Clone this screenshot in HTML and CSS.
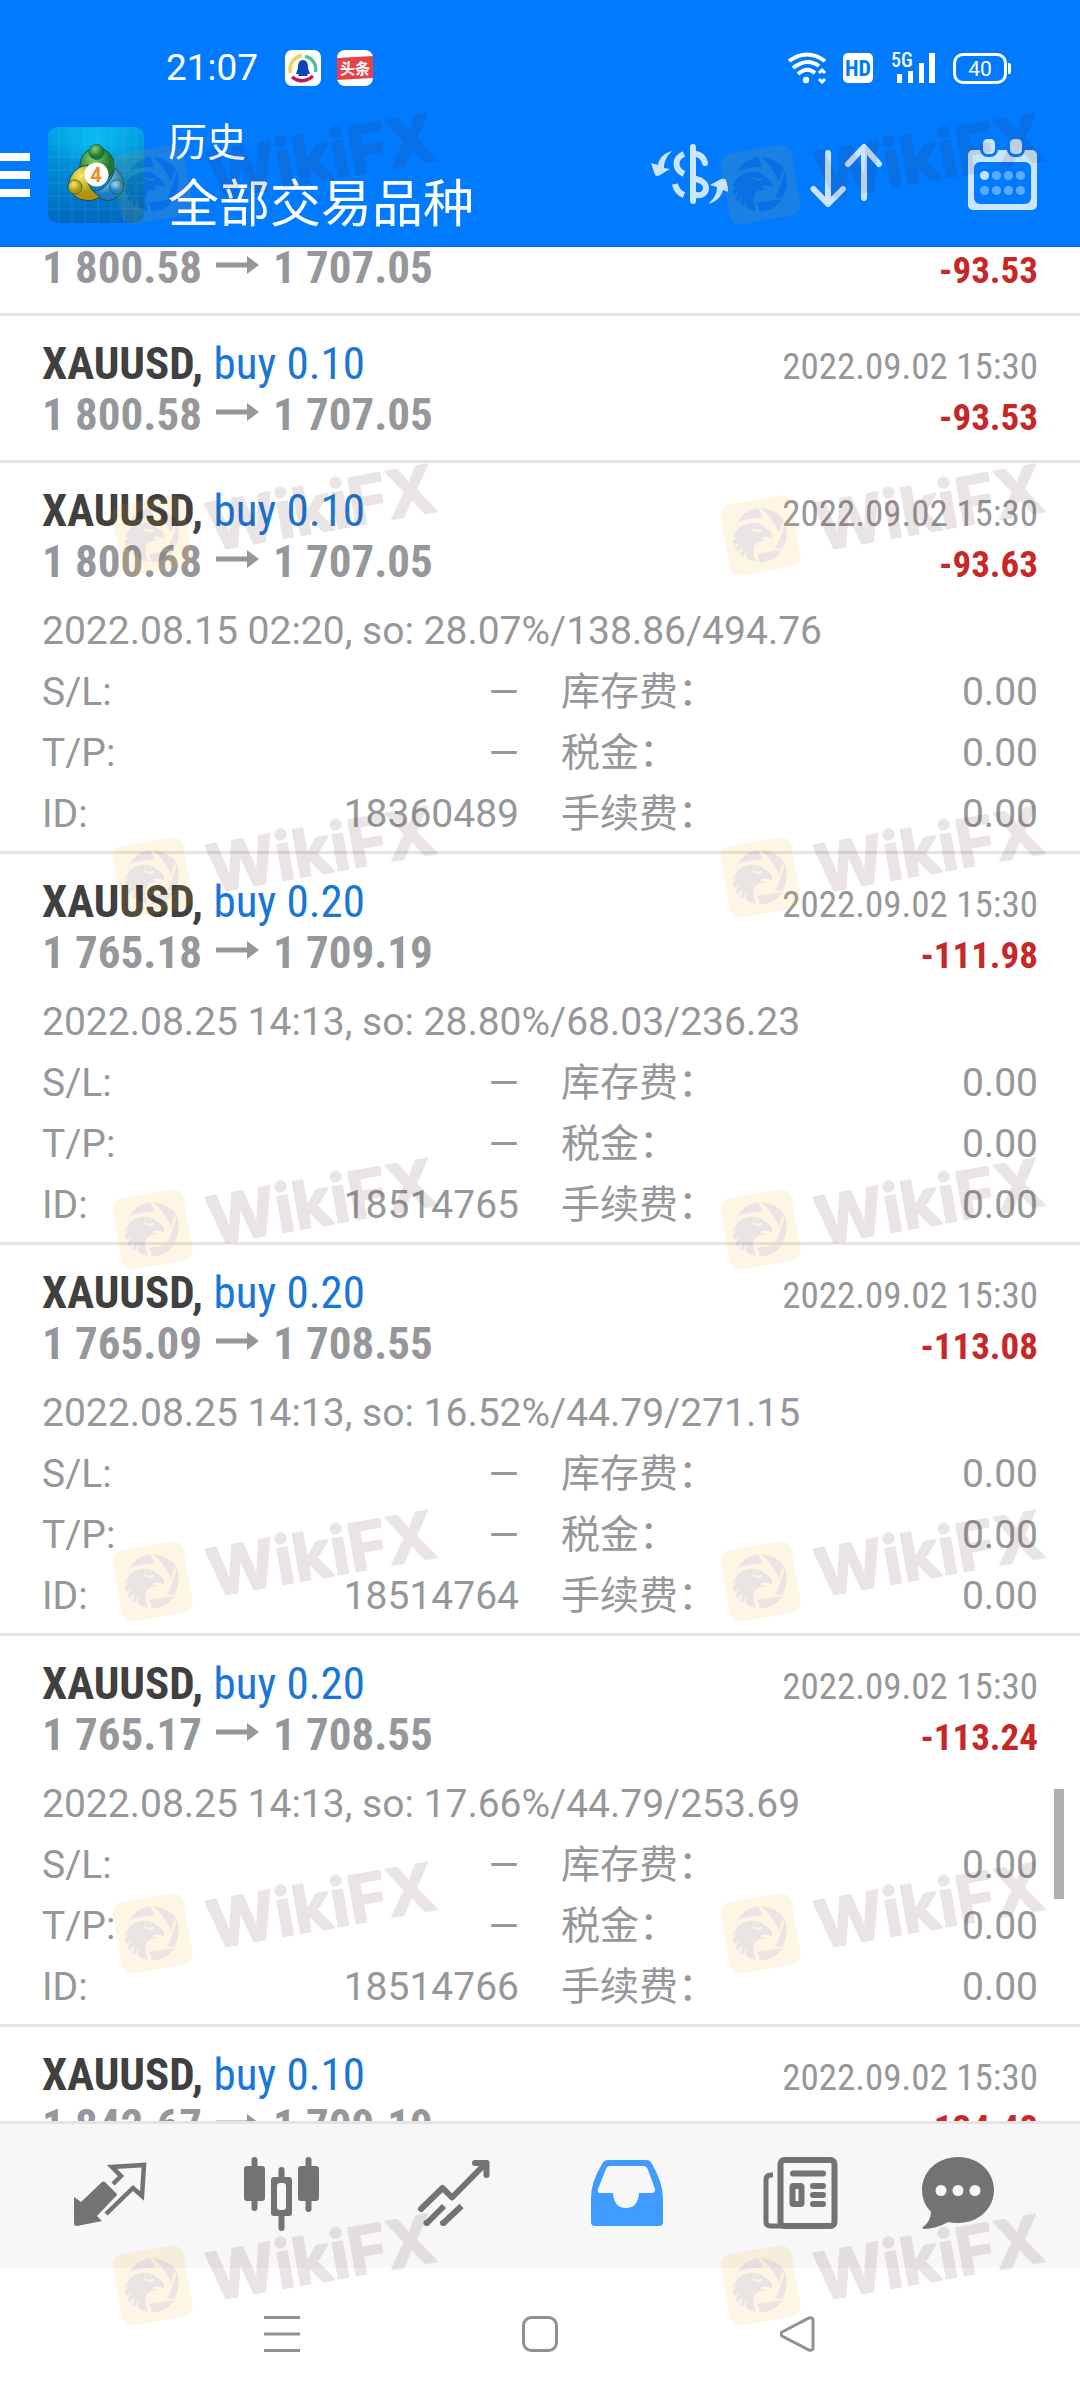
FILE: index.html
```html
<!DOCTYPE html>
<html lang="zh-CN">
<head>
<meta charset="utf-8">
<meta name="viewport" content="width=device-width, initial-scale=1">
<title>历史</title>
<link rel="stylesheet" href="styles.css">
</head>
<body>
<svg class="defs" aria-hidden="true">
  <defs>
    <symbol id="arrow" viewBox="0 0 43 18"><path d="M0 6.500h31V0l12 9-12 9v-6.500H0z"/></symbol>
    <symbol id="mark" viewBox="0 0 340 120">
      <rect x="8.500" y="40.500" width="72" height="72" rx="11" fill="#f0b012" transform="rotate(-10 44.500 76.500)"/>
      <g transform="translate(4 36) scale(.3333) translate(-30 -24)" fill="#491e14">
        <path d="M82 106Q102 70 145 63L157 92Q115 92 82 106z"/>
        <path d="M152 63Q195 66 222 98L207 136Q182 84 152 63z"/>
        <path d="M224 104Q240 150 217 184L195 186Q214 150 224 104z"/>
        <path d="M142 200L216 189Q195 224 150 227z"/>
        <path d="M69 150Q82 110 130 107Q156 107 165 124Q187 128 187 157L178 150Q161 146 152 153Q160 159 173 160Q141 159 132 176Q126 197 138 224Q120 222 108 212L109 184L102 209L91 203L98 178L84 196L75 186L88 167L71 176L69 160L80 152z"/>
      </g>
      <path d="M36 70q5 3 10 1" stroke="#f0b012" stroke-width="2" fill="none"/>
      <text class="mark-text" x="104" y="92" transform="rotate(-10 104 92)">WikiFX</text>
    </symbol>
  </defs>
</svg>
<div class="app">
  <header class="top">
    <div class="status">
      <span class="clock">21:07</span>
      <svg class="app-badge" viewBox="0 0 36 36" aria-hidden="true"><rect width="36" height="36" rx="7" fill="#fff"/><g fill="none" stroke-width="3.500"><path d="M5.500 23A14 14 0 0 1 17 5.500" stroke="#ecd35f"/><path d="M20 6.500A13 13 0 0 1 30.500 22" stroke="#4fc3a1"/><path d="M7 27Q17 35 28 26" stroke="#c2185b"/></g><path d="M18 10c5 0 5 6 5 8l2 6h-3l1 2H13l1-2h-3l2-6c0-2 0-8 5-8z" fill="#0b45b5"/></svg>
      <svg class="app-badge" viewBox="0 0 36 36" aria-hidden="true"><rect width="36" height="36" rx="8" fill="#fff"/><path d="M0 8l36-2v22L0 30z" fill="#e5434a"/><text class="badge-text" x="18" y="24">头条</text></svg>
      <span class="spacer"></span>
      <svg class="wifi" viewBox="0 0 42 32" aria-hidden="true"><g fill="none" stroke="#fff" stroke-width="4"><path d="M2 9Q20-4 38 9"/><path d="M6 16Q20 5 32 14"/><path d="M11 22Q20 14 28 21"/></g><circle cx="19" cy="28" r="3.200" fill="#fff"/><path d="M32 21l3-3 3 3M32 27l3 3 3-3" fill="none" stroke="#fff" stroke-width="3"/></svg>
      <span class="hd">HD</span>
      <svg class="signal" viewBox="0 0 45 32" aria-hidden="true"><text class="signal-text" x="0" y="15">5G</text><path d="M6 22h5v9H6zM17 19h5v12h-5zM28 11h5v20h-5zM38 1h6v30h-6z" fill="#fff"/></svg>
      <span class="battery">40</span>
    </div>
    <div class="toolbar">
      <button class="menu" type="button" aria-label="菜单"><span></span><span></span><span></span></button>
      <svg class="logo" viewBox="0 0 96 96" aria-hidden="true">
        <defs>
          <linearGradient id="lg" x2="0" y2="1"><stop stop-color="#03a4e4"/><stop offset="1" stop-color="#0068c0"/></linearGradient>
          <radialGradient id="glow" cy=".15"><stop stop-color="#08bdf0"/><stop offset="1" stop-color="#08bdf0" stop-opacity="0"/></radialGradient>
          <radialGradient id="gg" cx=".4" cy=".3"><stop stop-color="#8fd06f"/><stop offset="1" stop-color="#1b7a2f"/></radialGradient>
          <radialGradient id="gy" cx=".4" cy=".3"><stop stop-color="#f7ea6c"/><stop offset="1" stop-color="#b2940c"/></radialGradient>
          <radialGradient id="gb" cx=".4" cy=".3"><stop stop-color="#9bdcf8"/><stop offset="1" stop-color="#1b7cc0"/></radialGradient>
        </defs>
        <rect width="96" height="96" rx="9" fill="url(#lg)"/><rect width="96" height="70" rx="9" fill="url(#glow)"/>
        <path d="M0 17h96M0 30h96M0 43h96M0 56h96M0 69h96M0 82h96M11 0v96M24 0v96M37 0v96M50 0v96M63 0v96M76 0v96M88 0v96" stroke="#7fe0ff" stroke-opacity=".15"/>
        <g stroke="#154d58" stroke-width="1"><circle cx="49" cy="38" r="17" fill="url(#gg)"/><path d="M42 64Q60 66 67 41Q79 50 75 64Q66 76 56 73Q48 71 42 64z" fill="url(#gb)"/><path d="M20 60Q22 40 40 38Q34 58 52 70Q44 75 36 73Q26 72 20 60z" fill="url(#gy)"/></g>
        <g stroke="#1b5e42" stroke-width=".7"><circle cx="48.500" cy="25" r="7.500" fill="url(#gg)"/><circle cx="27" cy="60" r="7" fill="url(#gy)"/><circle cx="68.500" cy="60" r="7" fill="url(#gb)"/></g>
        <circle cx="48.500" cy="47.500" r="12" fill="#fff"/><text class="logo-text" x="48" y="55">4</text>
      </svg>
      <div class="titles"><h1>历史</h1><p>全部交易品种</p></div>
      <div class="actions">
        <button type="button" aria-label="货币"><svg width="78" height="72" viewBox="0 0 78 72"><g fill="none" stroke="#cbe5ff" stroke-width="6"><path d="M43 8v54" stroke-linecap="round"/><path d="M34 15C24 19 24 30 34 35M25 45C26 51 29 54 34 56"/><path d="M46 15C52 16 54 20 55 24M46 40C52 41 56 45 56 49C56 54 52 57 46 56" stroke-linecap="round"/></g><path d="M22 12C14 14 9 19 8 26L1 24L5 36Q7 38 10 36L20 30L14 29C14 22 17 17 22 12zM58 65C65 59 67 54 67 48L60 46L71 40Q75 39 76 41L79 53L73 51C71 58 66 63 58 65z" fill="#cbe5ff"/></svg></button>
        <button type="button" aria-label="排序"><svg width="76" height="72" viewBox="0 0 76 72"><path d="M18 14v50M3.500 50L18 65L33 50M54 59V9M38 25L54 8L69 25" fill="none" stroke="#cbe5ff" stroke-width="6" stroke-linecap="round" stroke-linejoin="round"/></svg></button>
        <button type="button" aria-label="日历"><svg width="70" height="72" viewBox="0 0 70 72"><rect y="11" width="69" height="60" rx="5" fill="#cbe5ff"/><rect x="6" y="23" width="57" height="42" rx="6" fill="#007aff"/><g fill="#cbe5ff" stroke="#007aff" stroke-width="3"><rect x="13.500" y="-1.500" width="15" height="18" rx="6"/><rect x="40.500" y="-1.500" width="15" height="18" rx="6"/></g><g fill="#5cabff"><circle cx="16.500" cy="36.500" r="4.600" fill="#c0e2ff"/><circle cx="28.500" cy="36.500" r="4.600"/><circle cx="40.500" cy="36.500" r="4.600"/><circle cx="52.500" cy="36.500" r="4.600"/><circle cx="16.500" cy="51.500" r="4.600"/><circle cx="28.500" cy="51.500" r="4.600"/><circle cx="40.500" cy="51.500" r="4.600"/><circle cx="52.500" cy="51.500" r="4.600"/></g></svg></button>
      </div>
    </div>
  </header>

  <main class="history">
    <div class="deals">
      <article class="deal">
        <div class="line"><h2>XAUUSD, <span>buy 0.10</span></h2><time>2022.09.02 15:30</time></div>
        <div class="line"><p class="prices">1 800.58<svg class="to"><use href="#arrow"/></svg>1 707.05</p><p class="profit">-93.53</p></div>
      </article>
      <article class="deal">
        <div class="line"><h2>XAUUSD, <span>buy 0.10</span></h2><time>2022.09.02 15:30</time></div>
        <div class="line"><p class="prices">1 800.58<svg class="to"><use href="#arrow"/></svg>1 707.05</p><p class="profit">-93.53</p></div>
      </article>
      <article class="deal">
        <div class="line"><h2>XAUUSD, <span>buy 0.10</span></h2><time>2022.09.02 15:30</time></div>
        <div class="line"><p class="prices">1 800.68<svg class="to"><use href="#arrow"/></svg>1 707.05</p><p class="profit">-93.63</p></div>
        <div class="details">
          <p class="note">2022.08.15 02:20, so: 28.07%/138.86/494.76</p>
          <dl><div><dt>S/L:</dt><dd>—</dd></div><div><dt>库存费：</dt><dd>0.00</dd></div><div><dt>T/P:</dt><dd>—</dd></div><div><dt>税金：</dt><dd>0.00</dd></div><div><dt>ID:</dt><dd>18360489</dd></div><div><dt>手续费：</dt><dd>0.00</dd></div></dl>
        </div>
      </article>
      <article class="deal">
        <div class="line"><h2>XAUUSD, <span>buy 0.20</span></h2><time>2022.09.02 15:30</time></div>
        <div class="line"><p class="prices">1 765.18<svg class="to"><use href="#arrow"/></svg>1 709.19</p><p class="profit">-111.98</p></div>
        <div class="details">
          <p class="note">2022.08.25 14:13, so: 28.80%/68.03/236.23</p>
          <dl><div><dt>S/L:</dt><dd>—</dd></div><div><dt>库存费：</dt><dd>0.00</dd></div><div><dt>T/P:</dt><dd>—</dd></div><div><dt>税金：</dt><dd>0.00</dd></div><div><dt>ID:</dt><dd>18514765</dd></div><div><dt>手续费：</dt><dd>0.00</dd></div></dl>
        </div>
      </article>
      <article class="deal">
        <div class="line"><h2>XAUUSD, <span>buy 0.20</span></h2><time>2022.09.02 15:30</time></div>
        <div class="line"><p class="prices">1 765.09<svg class="to"><use href="#arrow"/></svg>1 708.55</p><p class="profit">-113.08</p></div>
        <div class="details">
          <p class="note">2022.08.25 14:13, so: 16.52%/44.79/271.15</p>
          <dl><div><dt>S/L:</dt><dd>—</dd></div><div><dt>库存费：</dt><dd>0.00</dd></div><div><dt>T/P:</dt><dd>—</dd></div><div><dt>税金：</dt><dd>0.00</dd></div><div><dt>ID:</dt><dd>18514764</dd></div><div><dt>手续费：</dt><dd>0.00</dd></div></dl>
        </div>
      </article>
      <article class="deal">
        <div class="line"><h2>XAUUSD, <span>buy 0.20</span></h2><time>2022.09.02 15:30</time></div>
        <div class="line"><p class="prices">1 765.17<svg class="to"><use href="#arrow"/></svg>1 708.55</p><p class="profit">-113.24</p></div>
        <div class="details">
          <p class="note">2022.08.25 14:13, so: 17.66%/44.79/253.69</p>
          <dl><div><dt>S/L:</dt><dd>—</dd></div><div><dt>库存费：</dt><dd>0.00</dd></div><div><dt>T/P:</dt><dd>—</dd></div><div><dt>税金：</dt><dd>0.00</dd></div><div><dt>ID:</dt><dd>18514766</dd></div><div><dt>手续费：</dt><dd>0.00</dd></div></dl>
        </div>
      </article>
      <article class="deal">
        <div class="line"><h2>XAUUSD, <span>buy 0.10</span></h2><time>2022.09.02 15:30</time></div>
        <div class="line"><p class="prices">1 842.67<svg class="to"><use href="#arrow"/></svg>1 709.19</p><p class="profit">-134.48</p></div>
      </article>
    </div>
    <div class="thumb"></div>
  </main>

  <nav class="tabs">
    <a href="#quotes" aria-label="行情"><svg viewBox="0 0 96 96"><path d="M12 49l7 5 21-20q2-1 3 0l11 11q2 2 0 3L35 68l5 5-25 5q-3 0-3-3z" fill="#737373"/><path d="M51 36l8-8-9-9 32-2-2 31-9-8-27 26" fill="none" stroke="#737373" stroke-width="4.500"/></svg></a>
    <a href="#charts" aria-label="图表"><svg viewBox="0 0 96 96"><g fill="#737373"><rect x="17.500" y="9" width="6" height="54" rx="3"/><rect x="10" y="18" width="21" height="35" rx="3"/><rect x="44.500" y="19" width="6" height="64" rx="3"/><rect x="71.500" y="9" width="6" height="55" rx="3"/><rect x="64" y="18" width="21" height="35" rx="3"/><path d="M40 29h15q3 0 3 3v33q0 3-3 3H40q-3 0-3-3V32q0-3 3-3z"/></g><rect x="43" y="35" width="9" height="27" rx="3" fill="#f7f7f7"/></svg></a>
    <a href="#trade" aria-label="交易"><svg viewBox="0 0 96 96"><g fill="none" stroke="#737373" stroke-width="6" stroke-linejoin="round"><path d="M15 61l21.500-21L46 49.500 80 15M69 15h11.500v12" stroke-linecap="round"/><path d="M20 76l18-18M36.500 76l19-18"/></g><circle cx="20.500" cy="75" r="3" fill="#737373"/><circle cx="37" cy="75" r="3" fill="#737373"/></svg></a>
    <a href="#history" aria-label="历史" aria-current="page"><svg viewBox="0 0 96 96"><path d="M30 12h38q4 0 6 4 11 19 11 34v24q0 4-4 4H17q-4 0-4-4V50q0-16 11-34 2-4 6-4zm2 6q-3 0-4 3l-8 20q-1 4 2 4h13q1 15 13 15t13-15h13q3 0 3-4l-7-19q-1-4-5-4z" fill="#409bff" fill-rule="evenodd"/></svg></a>
    <a href="#news" aria-label="新闻"><svg viewBox="0 0 96 96"><g fill="none" stroke="#737373" stroke-width="6"><rect x="30.500" y="12" width="54" height="66" rx="4"/><path d="M23 27h-2q-5 0-5 5v42q0 4 5 4h12" stroke-width="5"/><path d="M43 25.500h30M63 38h10M63 47h10M63 56h10" stroke-linecap="round"/><rect x="42.500" y="38" width="9" height="18" rx="1"/></g></svg></a>
    <a href="#chat" aria-label="消息"><svg viewBox="0 0 96 96"><path d="M36 9C57 9 72 24 72 42S57 75 36 75q-6 0-10-1Q14 81 2 81 -1 80 1 79 9 73 9 64 0 55 0 42C0 24 15 9 36 9z" fill="#737373"/><g fill="#f7f7f7"><circle cx="19" cy="42.500" r="5.500"/><circle cx="36" cy="42.500" r="5.500"/><circle cx="53" cy="42.500" r="5.500"/></g></svg></a>
  </nav>
  <div class="system">
    <button type="button" aria-label="最近任务"><svg viewBox="0 0 36 36"><path d="M0 1.500h36M0 18h36M0 34.500h36"/></svg></button>
    <button type="button" aria-label="主屏幕"><svg viewBox="0 0 36 36"><rect x="1.500" y="1.500" width="33" height="33" rx="8"/></svg></button>
    <button type="button" aria-label="返回"><svg viewBox="0 0 36 36"><path d="M2 16L29 2q4-1 4 2v28q0 3-4 2L2 20q-2-2 0-4z"/></svg></button>
  </div>

  <div class="marks" aria-hidden="true">
    <svg><use href="#mark"/></svg><svg><use href="#mark"/></svg>
    <svg><use href="#mark"/></svg><svg><use href="#mark"/></svg>
    <svg><use href="#mark"/></svg><svg><use href="#mark"/></svg>
    <svg><use href="#mark"/></svg><svg><use href="#mark"/></svg>
    <svg><use href="#mark"/></svg><svg><use href="#mark"/></svg>
    <svg><use href="#mark"/></svg><svg><use href="#mark"/></svg>
    <svg><use href="#mark"/></svg><svg><use href="#mark"/></svg>
  </div>
</div>
</body>
</html>
```

FILE: styles.css
```css
* { box-sizing: border-box; margin: 0; padding: 0; }
body { background: #fff; font-family: Roboto, "Noto Sans CJK SC", sans-serif; font-size: 39px; color: #96979b; }
button { background: none; border: 0; display: block; cursor: pointer; }
svg { display: block; }
.defs { position: absolute; width: 0; height: 0; }
.app { position: relative; display: flex; flex-direction: column; height: 100vh; overflow: hidden; }

/* Header */
.top { flex: none; background: #007aff; color: #fff; border-bottom: 1px solid #1565c0; padding-bottom: 14px; }
.status { display: flex; align-items: center; height: 86px; padding: 50px 69px 0 166px; }
.clock { font-size: 37px; line-height: 36px; margin-right: 27px; }
.app-badge { width: 36px; height: 36px; margin-right: 16px; }
.badge-text { font-size: 15px; font-weight: 700; fill: #fff; text-anchor: middle; }
.spacer { flex: 1; }
.wifi { width: 42px; height: 32px; margin-right: 14px; }
.hd { width: 30px; height: 30px; border-radius: 5px; background: #fff; color: #007aff; font: 700 22px/31px "Roboto Condensed", Roboto, sans-serif; text-align: center; margin-right: 18px; }
.signal { width: 45px; height: 32px; margin-right: 17px; }
.signal-text { font: 500 20px "Roboto Condensed", Roboto, sans-serif; fill: #fff; }
.battery { position: relative; width: 54px; height: 31px; border: 3px solid #fff; border-radius: 10px; font-size: 21px; line-height: 26px; text-align: center; margin-right: 4px; }
.battery::after { content: ""; position: absolute; right: -7px; top: 7px; width: 3px; height: 11px; border-radius: 0 2px 2px 0; background: #fff; }
.toolbar { display: flex; align-items: center; height: 146px; padding-right: 42px; padding-top: 32px; }
.menu { display: grid; gap: 10px; width: 30px; margin-right: 18px; }
.menu span { height: 8px; background: #fff; }
.logo { flex: none; width: 96px; height: 96px; margin-right: 24px; }
.logo-text { font-size: 20px; font-weight: 700; fill: #f08a24; text-anchor: middle; }
.titles { flex: 1; padding-top: 8px; }
.titles h1 { font-size: 39px; line-height: 51px; font-weight: 400; }
.titles p { font-size: 51px; line-height: 72px; white-space: nowrap; }
.actions { display: flex; gap: 82px; }

/* Deal list */
.history { position: relative; flex: 1; min-height: 0; overflow: hidden; }
.deals { margin-top: -78px; }
.deal { padding: 22px 42px 20px; border-bottom: 3px solid #e4e4e4; }
.deal:has(.details) { padding-bottom: 6px; }
.line { display: flex; justify-content: space-between; align-items: baseline; height: 51px; font-family: "Roboto Condensed", "Liberation Sans Narrow", Roboto, sans-serif; line-height: 51px; white-space: nowrap; }
.line h2 { font-size: 45px; font-weight: 700; color: #404040; }
.line h2 span { font-weight: 400; color: #1976d8; }
.line time { font-size: 37px; }
.prices { font-size: 45px; font-weight: 700; }
.to { display: inline-block; width: 43px; height: 18px; margin: 0 14px; vertical-align: 9px; fill: #96979b; }
.profit { font-size: 37px; font-weight: 700; color: #c62828; }
.details { margin-top: 14px; line-height: 61px; }
.note { white-space: nowrap; }
.details dl { display: grid; grid-template-columns: 1fr 1fr; column-gap: 42px; grid-auto-rows: 61px; }
.details dl div { display: flex; justify-content: space-between; }
.thumb { position: absolute; right: 16px; top: 1542px; width: 10px; height: 110px; background: #b0b0b0; }

/* Bottom bars */
.tabs { flex: none; display: flex; height: 147px; padding: 0 24px; background: #f7f7f7; border-top: 3px solid #e4e4e4; }
.tabs a { flex: 1; display: flex; align-items: center; justify-content: center; }
.tabs svg { width: 96px; height: 96px; }
.system { flex: none; display: flex; justify-content: center; align-items: center; gap: 222px; height: 132px; background: #fff; }
.system svg { width: 36px; height: 36px; fill: none; stroke: #919191; stroke-width: 3px; }

/* Watermark pattern laid over the whole screen */
.marks { position: absolute; inset: 0; display: grid; grid-template-columns: 608px 340px; grid-template-rows: 351px 342px repeat(5, 352px); padding: 108px 0 0 108px; opacity: .11; overflow: hidden; pointer-events: none; }
.marks svg { width: 340px; height: 120px; }
.mark-text { font: 700 66px Inter, sans-serif; fill: #491e14; stroke: #491e14; stroke-width: 2px; stroke-linejoin: round; }
```
